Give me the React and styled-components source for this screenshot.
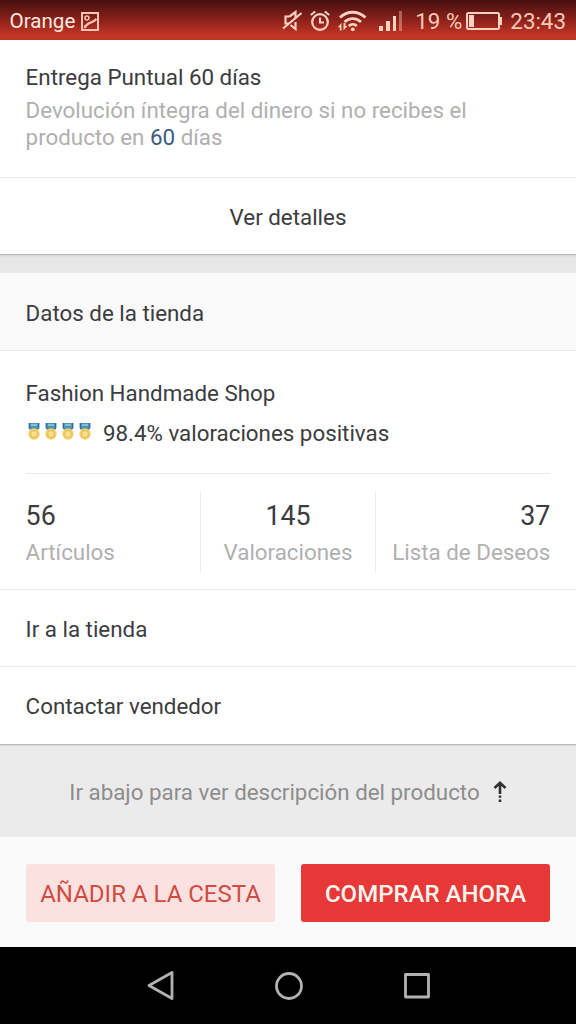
import React from "react";
import styled, { createGlobalStyle } from "styled-components";

const textColor = "#3c3c40";
const mutedColor = "#b0b0b0";
const lineColor = "#ebebeb";
const statusColor = "#ffd2c0";

const stats = [
  { value: "56", label: "Artículos", align: "left" },
  { value: "145", label: "Valoraciones", align: "center" },
  { value: "37", label: "Lista de Deseos", align: "right" },
];

const PictureIcon = () => (
  <svg width="18" height="19" viewBox="0 0 18 19" fill="none" stroke="#ffc4b0">
    <rect x="1" y="1" width="16" height="17" strokeWidth="2" />
    <circle cx="6" cy="6" r="2" strokeWidth="1.6" />
    <path d="M3.5 16C6 9.500 11 12 15.500 7" strokeWidth="2.200" />
  </svg>
);

const MuteIcon = () => (
  <svg
    width="20"
    height="21"
    viewBox="0 0 20 21"
    fill="none"
    stroke={statusColor}
    strokeWidth="2.200"
  >
    <path d="M7.500 6.500H3.500v7h3M7.500 6.500l6-4.500v6M13.500 12v7l-5-4" />
    <path d="M1 18.500L19.500 3" strokeWidth="2" />
  </svg>
);

const AlarmIcon = () => (
  <svg
    width="20"
    height="22"
    viewBox="0 0 20 22"
    fill="none"
    stroke={statusColor}
    strokeWidth="2.200"
  >
    <circle cx="10" cy="12" r="7.800" />
    <path d="M10 7.500v5h4" />
    <path d="M.8 5l4.400-3.500M19.200 5l-4.400-3.500" />
  </svg>
);

const WifiIcon = () => (
  <svg
    width="30"
    height="22"
    viewBox="0 0 30 22"
    fill="none"
    stroke={statusColor}
    strokeWidth="2.800"
  >
    <path d="M2 7.500C9 .5 20 .5 27.500 7.500" />
    <path d="M6.500 12C11 7.500 18.500 7.500 23 12" />
    <path d="M10.800 16c2.300-2.300 5.700-2.300 8 0" />
    <circle cx="14.800" cy="19.300" r="1.900" fill={statusColor} stroke="none" />
    <path
      d="M3.500 13L-.2 17.200h2v3.300h1.700zM5.500 20.500L9.500 16h-2v-3h-2z"
      fill={statusColor}
      stroke="none"
    />
  </svg>
);

const SignalIcon = () => (
  <svg width="24" height="20" viewBox="0 0 24 20" fill={statusColor}>
    <rect x="0" y="15" width="4" height="5" />
    <rect x="7" y="10" width="4" height="10" />
    <rect x="14" y="5" width="3" height="15" />
    <rect x="20" y="0" width="3" height="20" opacity="0.4" />
  </svg>
);

const BatteryIcon = () => (
  <svg width="36" height="18" viewBox="0 0 36 18">
    <rect
      x="1"
      y="1"
      width="32"
      height="16"
      rx="1.500"
      fill="none"
      stroke={statusColor}
      strokeWidth="2"
    />
    <rect x="3" y="3" width="5" height="12" fill={statusColor} />
    <rect x="34" y="5" width="2" height="8" fill={statusColor} />
  </svg>
);

const MedalIcon = () => (
  <svg width="12" height="17" viewBox="0 0 12 17">
    <path d="M.5 0h11v5L9 8H3L.5 5z" fill="#4d93bb" />
    <path d="M3 1h6v2H3z" fill="#88bcd6" />
    <path d="M1 0h1v6H1zM10 0h1v6h-1z" fill="#356b8c" />
    <circle cx="6" cy="11" r="5.700" fill="#f2cf68" />
    <circle cx="6" cy="11" r="3.500" fill="#fae084" stroke="#e2ba55" />
  </svg>
);

const ArrowIcon = () => (
  <svg
    width="14"
    height="22"
    viewBox="0 0 14 22"
    fill="none"
    stroke="#303030"
    strokeWidth="2.600"
  >
    <path d="M1.500 7L7 1.800 12.500 7M7 2v11M7 14.500v2.300M7 18.500v2.500" />
  </svg>
);

const App = () => {
  return (
    <Screen>
      <GlobalStyle />
      <StatusBar>
        <Carrier>
          Orange <PictureIcon />
        </Carrier>
        <StatusIcons>
          <MuteIcon />
          <AlarmIcon />
          <WifiIcon />
          <Signal>
            <SignalIcon />
          </Signal>
          <Percent>19 %</Percent>
          <BatteryIcon />
          <span>23:43</span>
        </StatusIcons>
      </StatusBar>

      <Delivery>
        <DeliveryTitle>Entrega Puntual 60 días</DeliveryTitle>
        <DeliveryText>
          Devolución íntegra del dinero si no recibes el producto en{" "}
          <Days>60</Days> días
        </DeliveryText>
      </Delivery>
      <DetailsButton>Ver detalles</DetailsButton>
      <Gap />

      <StoreHeader>Datos de la tienda</StoreHeader>
      <Store>
        <StoreName>Fashion Handmade Shop</StoreName>
        <Feedback>
          <Medals>
            {[1, 2, 3, 4].map((m) => (
              <MedalIcon key={m} />
            ))}
          </Medals>
          98.4% valoraciones positivas
        </Feedback>
        <Stats>
          {stats.map((s) => (
            <Stat key={s.label} $align={s.align}>
              <StatValue>{s.value}</StatValue>
              <StatLabel>{s.label}</StatLabel>
            </Stat>
          ))}
        </Stats>
      </Store>
      <StoreLink>Ir a la tienda</StoreLink>
      <StoreLink $last>Contactar vendedor</StoreLink>

      <ScrollHint>
        <span>Ir abajo para ver descripción del producto</span>
        <ArrowIcon />
      </ScrollHint>

      <Actions>
        <Button>
          <span>AÑADIR A LA CESTA</span>
        </Button>
        <Button $primary>
          <span>COMPRAR AHORA</span>
        </Button>
      </Actions>

      <NavBar>
        <svg width="28" height="32" viewBox="0 0 28 32">
          <path d="M2 15.500L25 2.500v26z" />
        </svg>
        <svg width="30" height="30" viewBox="0 0 30 30">
          <circle cx="15" cy="15" r="12.500" />
        </svg>
        <svg width="28" height="28" viewBox="0 0 28 28">
          <rect x="2.500" y="2.500" width="23" height="22.500" />
        </svg>
      </NavBar>
    </Screen>
  );
};

const GlobalStyle = createGlobalStyle`
  * {
    box-sizing: border-box;
  }

  body {
    margin: 0;
    background: #e9e9e9;
  }

  svg {
    display: block;
    flex-shrink: 0;
  }
`;

const Screen = styled.div`
  width: 576px;
  height: 1024px;
  display: flex;
  flex-direction: column;
  overflow: hidden;
  background: #eaeaea;
  color: ${textColor};
  font-family: Roboto, "Liberation Sans", sans-serif;
  font-size: 22.35px;
  line-height: 26px;
`;

const StatusBar = styled.header`
  height: 40px;
  flex-shrink: 0;
  padding: 1px 10px 0 9.5px;
  display: flex;
  align-items: center;
  justify-content: space-between;
  background: linear-gradient(#45100e, #8c211b 50%, #bd3325 85%, #c03626);
  color: #ffc9b5;
`;

const Carrier = styled.div`
  display: flex;
  align-items: center;
  gap: 6px;
  padding-top: 1px;
  color: #ffeae0;
  font-size: 20.6px;
`;

const StatusIcons = styled.div`
  display: flex;
  align-items: center;
  gap: 8px;
`;

const Signal = styled.div`
  margin-left: 3px;
`;

const Percent = styled.span`
  margin: 0 -4px 0 4px;
`;

const Delivery = styled.section`
  height: 138px;
  flex-shrink: 0;
  padding: 24px 25.6px 0;
  background: #fff;
  border-bottom: 1px solid ${lineColor};
`;

const DeliveryTitle = styled.h2`
  margin: 0;
  font-size: inherit;
  font-weight: 400;
`;

const DeliveryText = styled.p`
  width: 470px;
  margin: 7px 0 0;
  color: ${mutedColor};
  line-height: 26.6px;
`;

const Days = styled.span`
  color: #3e5a80;
`;

const DetailsButton = styled.div`
  height: 77px;
  flex-shrink: 0;
  padding-top: 2px;
  display: flex;
  align-items: center;
  justify-content: center;
  background: #fff;
  border-bottom: 1px solid #b8b8b8;
`;

const Gap = styled.div`
  height: 18px;
  flex-shrink: 0;
  background: linear-gradient(#d4d4d4, #e7e7e7 2px);
`;

const StoreHeader = styled.h3`
  height: 78px;
  flex-shrink: 0;
  margin: 0;
  padding: 3px 25.6px 0;
  display: flex;
  align-items: center;
  background: #fafafa;
  border-bottom: 1px solid ${lineColor};
  font-size: inherit;
  font-weight: 400;
`;

const Store = styled.section`
  height: 239px;
  flex-shrink: 0;
  padding: 29px 25.6px 0;
  background: #fff;
  border-bottom: 1px solid ${lineColor};
`;

const StoreName = styled.div``;

const Feedback = styled.div`
  height: 68px;
  padding-top: 14px;
  display: flex;
  align-items: flex-start;
  border-bottom: 1px solid ${lineColor};
`;

const Medals = styled.div`
  display: flex;
  gap: 5px;
  margin: 3px 12px 0 2.4px;
`;

const Stats = styled.div`
  height: 80px;
  margin-top: 18px;
  display: grid;
  grid-template-columns: 174.4px 175px 1fr;
`;

const Stat = styled.div`
  padding-top: 8px;
  text-align: ${(props) => props.$align};
  white-space: nowrap;

  & + & {
    border-left: 1px solid ${lineColor};
  }
`;

const StatValue = styled.div`
  font-size: 26.8px;
  line-height: 32px;
`;

const StatLabel = styled.div`
  margin-top: 7px;
  color: ${mutedColor};
`;

const StoreLink = styled.div`
  height: ${(props) => (props.$last ? "78px" : "77px")};
  flex-shrink: 0;
  padding: ${(props) => (props.$last ? "1px" : "2px")} 25.6px 0;
  display: flex;
  align-items: center;
  background: #fff;
  border-bottom: 1px solid ${(props) => (props.$last ? "#b8b8b8" : lineColor)};
`;

const ScrollHint = styled.div`
  height: 92px;
  flex-shrink: 0;
  padding-top: 2px;
  display: flex;
  align-items: center;
  justify-content: center;
  gap: 13px;
  background: linear-gradient(#d8d8d8, #e9e9e9 2px, #ebebeb 20px);
  color: #8d8d8d;
`;

const Actions = styled.div`
  height: 110px;
  flex-shrink: 0;
  padding: 27px 26px 0;
  display: grid;
  grid-template-columns: 1fr 1fr;
  gap: 26px;
  background: #fafafa;
`;

const Button = styled.button`
  height: 58px;
  padding: 1px 0 0;
  border: none;
  border-radius: 3px;
  background: ${(props) => (props.$primary ? "#e53837" : "#fbe1e0")};
  color: ${(props) => (props.$primary ? "#fff5ef" : "#d04c42")};
  font: inherit;
  font-size: 24px;
  font-weight: ${(props) => (props.$primary ? 500 : 400)};
  white-space: nowrap;
`;

const NavBar = styled.nav`
  height: 77px;
  flex-shrink: 0;
  padding-left: 2px;
  display: flex;
  align-items: center;
  justify-content: center;
  gap: 99px;
  background: #000;

  svg {
    fill: none;
    stroke: #b2b2b2;
    stroke-width: 2.8px;
    stroke-linejoin: round;
  }
`;

export default App;
